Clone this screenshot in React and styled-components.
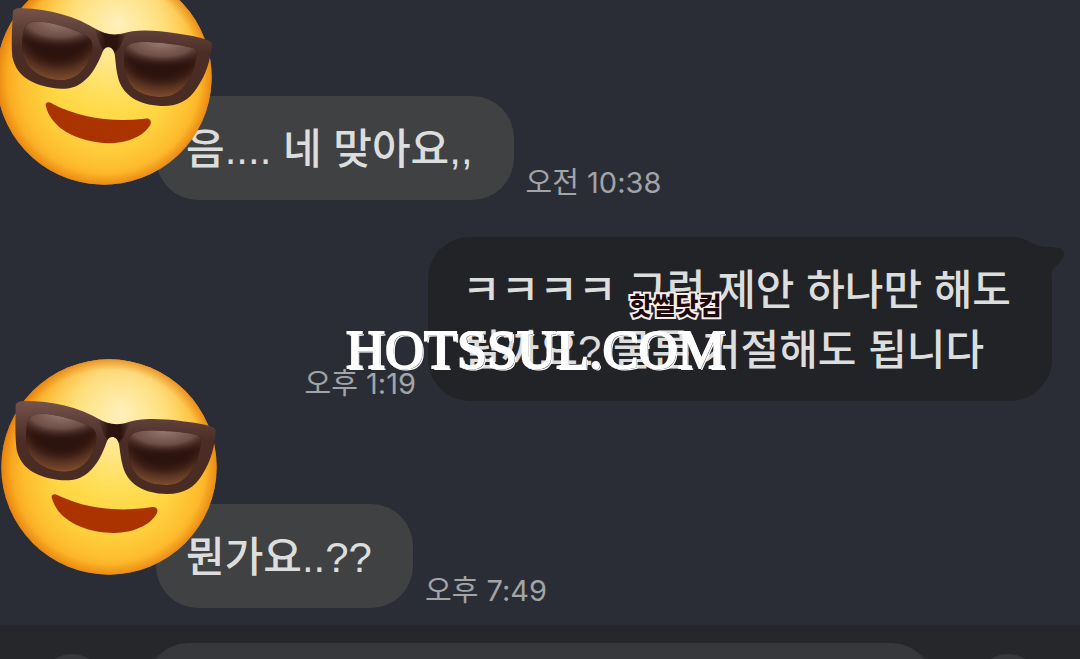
import React, { useId } from "react";
import styled, { createGlobalStyle } from "styled-components";

const GlobalStyle = createGlobalStyle`
  * { box-sizing: border-box; }
  body {
    margin: 0;
    background: #2a2d35;
    font-family: "Liberation Sans", "Noto Sans CJK KR", sans-serif;
  }
`;

const Screen = styled.div`
  position: relative;
  display: flex;
  flex-direction: column;
  height: 100vh;
  overflow: hidden;
  background: #2a2d35;
`;

const Messages = styled.main`
  display: flex;
  flex-direction: column;
  flex: none;
  padding: 96px 28px 17px 156px;
`;

const MessageRow = styled.article`
  position: relative;
  display: flex;
  flex-direction: ${(p) => (p.$mine ? "row-reverse" : "row")};
  align-items: flex-end;
  gap: 12px;
  margin-top: ${(p) => p.$space || 0}px;
`;

const Bubble = styled.p`
  position: relative;
  margin: 0;
  padding: 24px 41px 20px ${(p) => (p.$mine ? 34 : 30)}px;
  border-radius: 42px;
  background: ${(p) => (p.$mine ? "#222326" : "#404143")};
  color: #dcdddd;
  font-size: 42px;
  font-weight: 500;
  line-height: 60px;
  white-space: nowrap;
`;

const Tail = styled.svg`
  position: absolute;
  top: 0;
  right: -13px;
  width: 56px;
  height: 44px;
`;

const Time = styled.time`
  color: #a2a4a8;
  font-family: Inter, "Noto Sans CJK KR", sans-serif;
  font-size: 29px;
  line-height: 34px;
  white-space: nowrap;
`;

const Sticker = styled.svg`
  position: absolute;
  top: ${(p) => p.$top}px;
  left: ${(p) => p.$left}px;
  width: 216px;
  height: 216px;
  overflow: visible;
  transform: rotate(${(p) => p.$tilt || 0}deg);
`;

const Composer = styled.form`
  display: flex;
  flex: none;
  align-items: center;
  gap: 42px;
  padding: 18px 40px;
  background: #26272b;
`;

const RoundButton = styled.button`
  flex: none;
  width: 64px;
  height: 64px;
  padding: 0;
  border: 0;
  border-radius: 50%;
  background: #37383b;
`;

const MessageInput = styled.input`
  flex: 1;
  min-width: 0;
  height: 86px;
  padding: 0 36px;
  border: 0;
  border-radius: 43px;
  background: #37383c;
  color: #dcdddd;
  font: inherit;
  font-size: 42px;
`;

const Watermark = styled.div`
  position: absolute;
  top: 288px;
  left: 346px;
  display: flex;
  flex-direction: column;
  align-items: flex-end;
  pointer-events: none;
`;

const WatermarkName = styled.span`
  padding-right: 4px;
  color: #200a0c;
  font-family: "Noto Sans CJK KR", sans-serif;
  font-size: 25px;
  font-weight: 900;
  line-height: 32px;
  -webkit-text-stroke: 4px #f6eeee;
  paint-order: stroke fill;
`;

const WatermarkDomain = styled.span`
  color: #fff;
  font-family: "Liberation Serif", serif;
  font-size: 54px;
  line-height: 60px;
  -webkit-text-stroke: 2px #fff;
  text-shadow: 1px 1px 0 #26282c, 2px 2px 0 #fff;
`;

function Lens({ d, fills }) {
  return (
    <>
      <path d={d} fill="#2d130e" />
      {fills.map((fill) => (
        <path key={fill} d={d} fill={fill} />
      ))}
    </>
  );
}

function CoolFace({ top, left, tilt }) {
  const id = useId();
  const ref = (name) => `url(#${id}${name})`;
  const lensFills = [ref("glow"), ref("glint")];
  return (
    <Sticker viewBox="2 27 646 648" $top={top} $left={left} $tilt={tilt} role="img" aria-label="😎">
      <defs>
        <radialGradient id={`${id}skin`} gradientUnits="userSpaceOnUse" cx="335" cy="365" r="350">
          <stop offset="0" stopColor="#ffdf50" />
          <stop offset="0.5" stopColor="#ffd541" />
          <stop offset="0.75" stopColor="#fdbd2e" />
          <stop offset="0.9" stopColor="#f8a31d" />
          <stop offset="1" stopColor="#e98413" />
        </radialGradient>
        <radialGradient id={`${id}rim`} gradientUnits="userSpaceOnUse" cx="325" cy="351" r="323">
          <stop offset="0.9" stopColor="#e8820f" stopOpacity="0" />
          <stop offset="1" stopColor="#e07a0e" stopOpacity="0.6" />
        </radialGradient>
        <radialGradient id={`${id}shine`} gradientUnits="userSpaceOnUse" cx="360" cy="190" r="290">
          <stop offset="0" stopColor="#fff0bd" />
          <stop offset="0.45" stopColor="#ffe998" stopOpacity="0.75" />
          <stop offset="1" stopColor="#ffdf60" stopOpacity="0" />
        </radialGradient>
        <linearGradient id={`${id}frame`} x1="0" y1="0" x2="0" y2="1">
          <stop offset="0" stopColor="#765349" />
          <stop offset="0.2" stopColor="#60413a" />
          <stop offset="0.42" stopColor="#4b2d25" />
          <stop offset="1" stopColor="#492b22" />
        </linearGradient>
        <radialGradient id={`${id}glow`} cx="0.5" cy="0.2" r="0.82">
          <stop offset="0.45" stopColor="#2d130e" stopOpacity="0" />
          <stop offset="0.75" stopColor="#55301f" />
          <stop offset="1" stopColor="#83502f" />
        </radialGradient>
        <radialGradient id={`${id}glint`} cx="0.5" cy="0" r="0.8" gradientTransform="scale(1 0.58)">
          <stop offset="0" stopColor="#957970" />
          <stop offset="0.55" stopColor="#6e4e47" />
          <stop offset="1" stopColor="#2d130e" stopOpacity="0" />
        </radialGradient>
        <linearGradient id={`${id}bridge`} x1="0" y1="0" x2="1" y2="0">
          <stop offset="0" stopColor="#2d130e" stopOpacity="0" />
          <stop offset="0.35" stopColor="#2d130e" />
          <stop offset="0.7" stopColor="#2d130e" />
          <stop offset="1" stopColor="#2d130e" stopOpacity="0" />
        </linearGradient>
      </defs>
      <circle cx="325" cy="351" r="323" fill={ref("skin")} />
      <circle cx="325" cy="351" r="323" fill={ref("shine")} />
      <circle cx="325" cy="351" r="323" fill={ref("rim")} />
      <path
        d="M45 165Q48 152 75 153C150 153 235 170 305 213C330 225 352 228 377 219C410 205 470 204 540 213C590 219 640 226 645 240C643 290 630 335 606 372C582 415 545 433 497 432C430 430 388 405 370 360C360 330 358 300 355 283C350 256 325 255 318 276C305 312 290 345 262 368C235 391 205 393 170 389C100 380 60 350 48 300C42 250 45 200 45 165Z"
        fill={ref("frame")}
      />
      <path d="M290 204C325 225 352 228 390 214L368 262L354 278C348 257 326 255 320 270L308 250Z" fill={ref("bridge")} />
      <Lens
        d="M84 207C98 186 135 190 170 197C215 206 262 222 278 237C292 250 289 280 275 309C258 346 226 366 190 365C135 362 92 335 79 291C74 266 76 224 84 207Z"
        fills={lensFills}
      />
      <Lens
        d="M386 264C394 244 425 241 470 242C515 243 560 247 590 255C603 259 601 278 597 302C588 345 568 380 533 398C505 410 456 407 424 388C395 370 384 333 384 298C383 284 384 272 386 264Z"
        fills={lensFills}
      />
      <path d="M153 442C152 430 165 430 176 438C255 475 350 487 450 472C465 468 474 476 469 489C450 525 400 548 340 549C250 548 170 510 153 442Z" fill="#ab3300" />
    </Sticker>
  );
}

export default function App() {
  return (
    <>
      <GlobalStyle />
      <Screen>
        <Messages>
          <MessageRow>
            <Bubble>음.... 네 맞아요,,</Bubble>
            <Time>오전 10:38</Time>
            <CoolFace top={-127} left={-160} tilt={2} />
          </MessageRow>
          <MessageRow $mine $space={37}>
            <Bubble $mine>
              <Tail viewBox="0 0 56 44" aria-hidden="true">
                <path d="M0 0C15 0 22 8 31 9L50 11Q57 14 54 21Q50 27 43 33L38 44L0 30Z" fill="#222326" />
              </Tail>
              ㅋㅋㅋㅋ 그럼 제안 하나만 해도
              <br />
              될까요? 물론 거절해도 됩니다
            </Bubble>
            <Time>오후 1:19</Time>
          </MessageRow>
          <MessageRow $space={103}>
            <Bubble>뭔가요..??</Bubble>
            <Time>오후 7:49</Time>
            <CoolFace top={-145} left={-155} />
          </MessageRow>
        </Messages>
        <Composer onSubmit={(event) => event.preventDefault()}>
          <RoundButton type="button" aria-label="첨부" />
          <MessageInput type="text" aria-label="메시지 입력" />
          <RoundButton type="submit" aria-label="전송" />
        </Composer>
        <Watermark>
          <WatermarkName>핫썰닷컴</WatermarkName>
          <WatermarkDomain>HOTSSUL.COM</WatermarkDomain>
        </Watermark>
      </Screen>
    </>
  );
}
